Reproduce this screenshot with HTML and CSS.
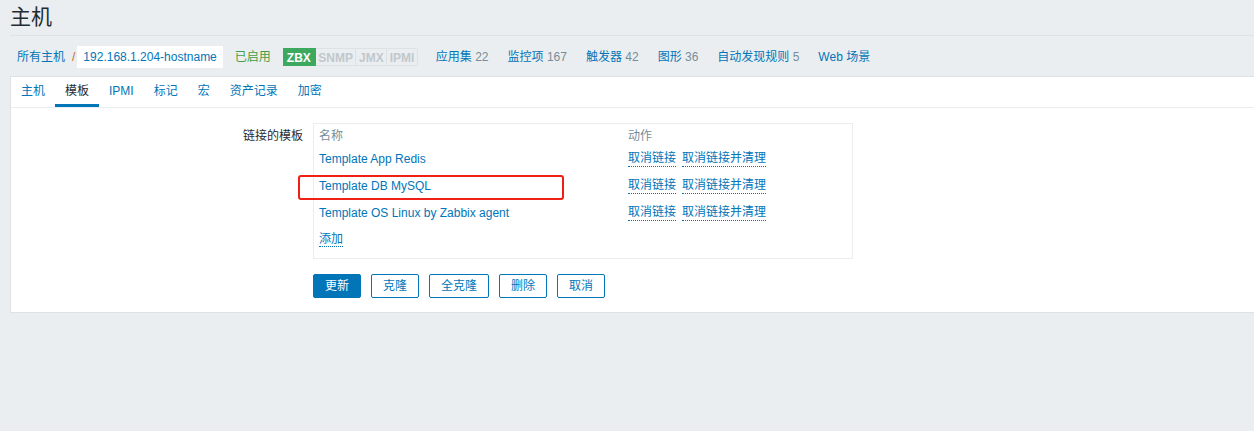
FILE: index.html
```html
<!DOCTYPE html>
<html lang="zh-CN">
<head>
<meta charset="utf-8">
<title>主机</title>
<link rel="stylesheet" href="styles.css">
</head>
<body>
<div class="page">
  <header class="header-title">
    <h1>主机</h1>
  </header>
  <nav class="crumbs">
    <a class="link" href="#">所有主机</a>
    <span class="sep">/</span>
    <span class="host-box"><a class="link" href="#">192.168.1.204-hostname</a></span>
    <span class="enabled">已启用</span>
    <span class="badges">
      <span class="badge on">ZBX</span><span class="badge">SNMP</span><span class="badge">JMX</span><span class="badge">IPMI</span>
    </span>
    <a class="link nav" href="#">应用集 <span class="count">22</span></a>
    <a class="link nav" href="#">监控项 <span class="count">167</span></a>
    <a class="link nav" href="#">触发器 <span class="count">42</span></a>
    <a class="link nav" href="#">图形 <span class="count">36</span></a>
    <a class="link nav" href="#">自动发现规则 <span class="count">5</span></a>
    <a class="link nav" href="#">Web 场景</a>
  </nav>
  <main class="panel">
    <ul class="tabs">
      <li><a class="tab" href="#">主机</a></li>
      <li><a class="tab active" href="#">模板</a></li>
      <li><a class="tab" href="#">IPMI</a></li>
      <li><a class="tab" href="#">标记</a></li>
      <li><a class="tab" href="#">宏</a></li>
      <li><a class="tab" href="#">资产记录</a></li>
      <li><a class="tab" href="#">加密</a></li>
    </ul>
    <div class="form">
      <div class="form-row">
        <label class="form-label">链接的模板</label>
        <div class="tpl-box">
          <div class="tpl-row head">
            <span class="c-name">名称</span>
            <span class="c-act">动作</span>
          </div>
          <div class="tpl-row">
            <span class="c-name"><a class="link" href="#">Template App Redis</a></span>
            <span class="c-act"><a class="dlink" href="#">取消链接</a><a class="dlink" href="#">取消链接并清理</a></span>
          </div>
          <div class="tpl-row marked">
            <span class="c-name"><a class="link" href="#">Template DB MySQL</a></span>
            <span class="c-act"><a class="dlink" href="#">取消链接</a><a class="dlink" href="#">取消链接并清理</a></span>
            <span class="mark"></span>
          </div>
          <div class="tpl-row">
            <span class="c-name"><a class="link" href="#">Template OS Linux by Zabbix agent</a></span>
            <span class="c-act"><a class="dlink" href="#">取消链接</a><a class="dlink" href="#">取消链接并清理</a></span>
          </div>
          <div class="tpl-row">
            <span class="c-name"><a class="dlink" href="#">添加</a></span>
          </div>
        </div>
      </div>
      <div class="buttons">
        <button class="btn primary">更新</button>
        <button class="btn">克隆</button>
        <button class="btn">全克隆</button>
        <button class="btn">删除</button>
        <button class="btn">取消</button>
      </div>
    </div>
  </main>
</div>
</body>
</html>
```
FILE: styles.css
```css
* { box-sizing: border-box; }
html, body {
  margin: 0;
  padding: 0;
  background: #ebeef0;
  overflow: hidden;
}
body {
  font-family: "Liberation Sans", Arial, "Noto Sans CJK SC", sans-serif;
  font-size: 12px;
  color: #1f2c33;
  line-height: 14px;
}
.page {
  padding-left: 10px;
  width: 1264px;
}
.header-title {
  height: 36px;
  border-bottom: 1px solid #dde2e5;
}
.header-title h1 {
  margin: 0;
  padding-top: 5px;
  font-size: 21px;
  line-height: 24px;
  font-weight: normal;
  color: #1f2c33;
}
.link {
  color: #0275b8;
  text-decoration: none;
}
.crumbs {
  height: 41px;
  border-bottom: 1px solid #dde2e5;
  display: flex;
  align-items: center;
  padding-left: 7px;
  padding-top: 1px;
}
.sep {
  color: #c26d1b;
  margin: 0 2px 0 7px;
}
.host-box {
  background: #fff;
  height: 22px;
  display: flex;
  align-items: center;
  padding: 0 6px;
  margin-right: 12px;
}
.enabled {
  color: #429e47;
  margin-right: 12px;
}
.badges {
  display: flex;
  margin-right: 18px;
}
.badge {
  height: 18px;
  line-height: 18px;
  padding: 0 2.5px;
  border: 1px solid #dde2e5;
  border-left: none;
  color: #c0c8cd;
  font-weight: bold;
  font-size: 12px;
}
.badge.on {
  background: #3ca95e;
  border-color: #3ca95e;
  color: #fff;
  padding: 0 4px;
}
.badge:last-child { border-radius: 0 2px 2px 0; }
.nav {
  margin-right: 19px;
}
.count { color: #768d99; }
.panel {
  background: #fff;
  border: 1px solid #dde2e5;
  border-right: none;
  border-top: none;
  margin-top: 0;
}
.tabs {
  list-style: none;
  margin: 0;
  padding: 0;
  display: flex;
  border-bottom: 1px solid #ebeef0;
  height: 31px;
}
.tab {
  display: block;
  padding: 0 10px;
  height: 30px;
  line-height: 29px;
  color: #0275b8;
  text-decoration: none;
  border-bottom: 3px solid transparent;
}
.tab.active {
  color: #1f2c33;
  border-bottom-color: #0275b8;
}
.form {
  padding: 15px 0 14px;
}
.form-row {
  display: flex;
  align-items: flex-start;
}
.form-label {
  width: 292px;
  text-align: right;
  padding-top: 6px;
  margin-right: 10px;
  color: #1f2c33;
}
.tpl-box {
  width: 540px;
  height: 136px;
  border: 1px solid #ebeef0;
}
.tpl-row {
  display: flex;
  height: 27px;
  align-items: center;
  position: relative;
}
.tpl-row.head {
  height: 21px;
  padding-top: 3px;
  color: #768d99;
}
.c-name {
  width: 314px;
  padding-left: 5px;
}
.c-act {
  display: flex;
  gap: 6px;
}
.dlink {
  color: #0275b8;
  text-decoration: none;
  border-bottom: 1px dotted #0275b8;
  line-height: 15px;
}
.mark {
  position: absolute;
  left: -16px;
  top: 3px;
  width: 266px;
  height: 25px;
  border: 2px solid #f02016;
  border-radius: 3px;
}
.buttons {
  display: flex;
  gap: 10px;
  margin-left: 302px;
  margin-top: 15px;
}
.btn {
  font-family: inherit;
  font-size: 12px;
  height: 24px;
  padding: 0 11px;
  background: #fff;
  color: #0275b8;
  border: 1px solid #0275b8;
  border-radius: 2px;
  line-height: 22px;
  margin: 0;
}
.btn.primary {
  background: #0275b8;
  color: #fff;
}
```
